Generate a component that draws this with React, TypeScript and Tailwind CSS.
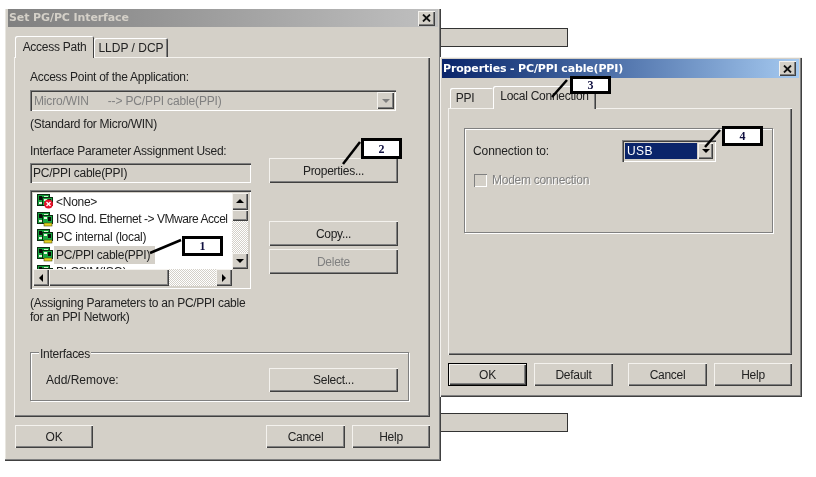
import React from "react";

const raised = "bg-[#d4d0c8] shadow-[inset_1px_1px_0_#f4f2ee,inset_-1px_-1px_0_#404040,inset_-2px_-2px_0_#808080]";
const sunken = "shadow-[inset_1px_1px_0_#808080,inset_2px_2px_0_#404040,inset_-1px_-1px_0_#ffffff]";
const panel = "bg-[#d4d0c8] shadow-[inset_1px_1px_0_#f4f2ee,inset_-1px_-1px_0_#404040,inset_-2px_-2px_0_#808080]";
const etched = "border border-[#808080] shadow-[1px_1px_0_#fff,inset_1px_1px_0_#fff]";

function Btn({ label, className = "" }: { label: string; className?: string }) {
  return <div className={`flex items-center justify-center ${raised} ${className}`}>{label}</div>;
}

function CloseBtn() {
  return (
    <div className={`w-[17px] h-[15px] flex items-center justify-center ${raised}`}>
      <svg width="9" height="8" viewBox="0 0 9 8">
        <path d="M1 0.5 L8 7.5 M8 0.5 L1 7.5" stroke="#111" strokeWidth="1.8" fill="none" />
      </svg>
    </div>
  );
}

function Arrow({ dir, color = "#000" }: { dir: "up" | "down" | "left" | "right"; color?: string }) {
  const d = { up: "M0 5 L4 1 L8 5 Z", down: "M0 2 L8 2 L4 6 Z", left: "M6 0 L6 8 L2 4 Z", right: "M2 0 L2 8 L6 4 Z" }[dir];
  return (
    <svg width="8" height="8" viewBox="0 0 8 8">
      <path d={d} fill={color} />
    </svg>
  );
}

function Chip({ bad }: { bad?: boolean }) {
  return (
    <svg width="17" height="15" viewBox="0 0 17 15" className="shrink-0">
      <rect x="0.5" y="0.5" width="12" height="11" fill="#14a03c" stroke="#0a2a10" />
      <rect x="2" y="2" width="3" height="4" fill="#0b0b0b" />
      <rect x="7" y="2" width="4" height="2" fill="#d8f0d0" />
      <rect x="2" y="8" width="3" height="2" fill="#e8f4e0" />
      <rect x="5.5" y="3.5" width="10" height="8" fill="#18a840" stroke="#0a2a10" />
      <rect x="7" y="5" width="3" height="2" fill="#eaf6e4" />
      <rect x="11" y="5" width="3" height="4" fill="#0b0b0b" />
      {bad ? (
        <g>
          <circle cx="11.5" cy="10" r="4.5" fill="#e8102a" />
          <path d="M9.5 8 L13.5 12 M13.5 8 L9.5 12" stroke="#fff" strokeWidth="1.4" />
        </g>
      ) : (
        <rect x="7" y="11" width="8" height="3" fill="#e3d21f" stroke="#4a4a10" strokeWidth="0.6" />
      )}
    </svg>
  );
}

function ListRow({ text, sel, bad, tight }: { text: string; sel?: boolean; bad?: boolean; tight?: boolean }) {
  return (
    <div className="flex items-center h-[17.6px] whitespace-nowrap">
      <Chip bad={bad} />
      <span className={`h-[18px] leading-[18px] ${tight ? "tracking-[-0.45px]" : ""} ${sel ? "bg-[#d4d0c8] pl-[2px] pr-[1px] w-[101px]" : "pl-[2px]"}`}>{text}</span>
    </div>
  );
}

function Callout({ n, className }: { n: string; className: string }) {
  return (
    <div
      className={`absolute z-20 w-[41px] bg-white border-[3px] border-black flex items-center justify-center text-[12px] tracking-normal leading-none font-bold text-[#101040] font-['Liberation_Serif',serif] ${className}`}
    >
      {n}
    </div>
  );
}

const dither = "bg-[repeating-conic-gradient(#ffffff_0_25%,#d4d0c8_0_50%)] bg-[length:2px_2px]";

export default function App() {
  return (
    <div className="relative w-[816px] h-[477px] bg-white overflow-hidden text-[12px] tracking-[-0.27px] leading-[14px] text-[#222] font-['Liberation_Sans',Arial,sans-serif] blur-[0.35px]">
      {/* Background slivers */}
      <div className="absolute left-[438px] top-[28px] w-[130px] h-[19px] bg-[#d4d0c8] border border-[#333]" />
      <div className="absolute left-[438px] top-[413px] w-[130px] h-[19px] bg-[#d4d0c8] border border-[#333]" />

      {/* Left window */}
      <div className="absolute left-[5px] top-[9px] w-[436px] h-[452px] bg-[#d4d0c8] shadow-[inset_-1px_-1px_0_#404040,inset_-2px_-2px_0_#808080,inset_1px_0_0_#e8e6e0] flex flex-col px-[3px] pt-0">
        <div className="h-[18px] flex items-center justify-between pl-[1px] pr-[3px] bg-gradient-to-r from-[#808080] to-[#c0c0c0]">
          <span className="font-bold text-[11px] tracking-[-0.1px] text-[#d4d0c8] font-['DejaVu_Sans',sans-serif] whitespace-nowrap">Set PG/PC Interface</span>
          <CloseBtn />
        </div>

        {/* Tabs */}
        <div className="flex items-end h-[30px] pl-[7px] relative z-10">
          <div className="w-[79px] h-[22px] -mb-px flex items-center justify-center rounded-t-[2px] bg-[#d4d0c8] shadow-[inset_1px_1px_0_#fff,inset_-1px_0_0_#404040]">Access Path</div>
          <div className="w-[74px] h-[19px] flex items-center justify-center rounded-t-[2px] bg-[#d4d0c8] shadow-[inset_1px_1px_0_#fff,inset_-1px_0_0_#404040,inset_-2px_0_0_#808080] tracking-normal">LLDP / DCP</div>
        </div>

        {/* Tab body */}
        <div className={`ml-[6px] w-[416px] h-[360px] pl-[16px] pt-[13px] flex flex-col ${panel}`}>
          <div className="h-[14px]">Access Point of the Application:</div>
          <div className={`mt-[6px] w-[366px] h-[21px] flex items-center justify-between pl-[4px] pr-[2px] tracking-[-0.15px] text-[#808080] ${sunken}`}>
            <span className="whitespace-pre">Micro/WIN      --&gt; PC/PPI cable(PPI)</span>
            <div className={`w-[17px] h-[17px] flex items-center justify-center ${raised}`}>
              <Arrow dir="down" color="#808080" />
            </div>
          </div>
          <div className="mt-[6px] h-[14px]">(Standard for Micro/WIN)</div>

          <div className="flex mt-[13px]">
            <div className="w-[221px]">
              <div className="h-[14px]">Interface Parameter Assignment Used:</div>
              <div className={`mt-[5px] h-[20px] pl-[3px] flex items-center ${sunken}`}>PC/PPI cable(PPI)</div>
              <div className={`mt-[7px] h-[99px] p-[3px] ${sunken} bg-[#d4d0c8]`}>
                <div className="grid grid-cols-[199px_16px] grid-rows-[76px_17px] h-[93px]">
                  <div className="bg-white overflow-hidden pl-[4px] pt-0">
                    <ListRow text="<None>" bad />
                    <ListRow text="ISO Ind. Ethernet -> VMware Accel" tight />
                    <ListRow text="PC internal (local)" />
                    <ListRow text="PC/PPI cable(PPI)" sel />
                    <ListRow text="PLCSIM(ISO)" />
                  </div>
                  <div className="flex flex-col">
                    <div className={`h-[17px] flex items-center justify-center ${raised}`}><Arrow dir="up" /></div>
                    <div className={`h-[11px] ${raised}`} />
                    <div className={`flex-1 ${dither}`} />
                    <div className={`h-[16px] flex items-center justify-center ${raised}`}><Arrow dir="down" /></div>
                  </div>
                  <div className="flex">
                    <div className={`w-[16px] flex items-center justify-center ${raised}`}><Arrow dir="left" /></div>
                    <div className={`w-[120px] ${raised}`} />
                    <div className={`flex-1 ${dither}`} />
                    <div className={`w-[16px] flex items-center justify-center ${raised}`}><Arrow dir="right" /></div>
                  </div>
                  <div className="bg-[#d4d0c8]" />
                </div>
              </div>
              <div className="mt-[7px] h-[28px] w-[225px]">(Assigning Parameters to an PC/PPI cable for an PPI Network)</div>
            </div>
            <div className="ml-[18px] w-[129px] flex flex-col">
              <Btn label="Properties..." className="mt-[14px] h-[25px]" />
              <Btn label="Copy..." className="mt-[38px] h-[25px]" />
              <Btn label="Delete" className="mt-[3px] h-[25px] text-[#808080]" />
            </div>
          </div>

          <div className={`relative mt-[28px] w-[379px] h-[49px] pl-[15px] pr-[10px] flex items-center justify-between ${etched}`}>
            <span className="absolute left-[8px] -top-[6px] bg-[#d4d0c8] px-[1px]">Interfaces</span>
            <span className="mt-[7px] tracking-normal">Add/Remove:</span>
            <Btn label="Select..." className="w-[129px] h-[24px] mt-[7px]" />
          </div>
        </div>

        {/* Footer */}
        <div className="flex ml-[7px] w-[415px] mt-[8px]">
          <Btn label="OK" className="w-[78px] h-[23px]" />
          <Btn label="Cancel" className="ml-auto w-[79px] h-[23px]" />
          <Btn label="Help" className="ml-[7px] w-[78px] h-[23px]" />
        </div>
      </div>

      {/* Right window */}
      <div className="absolute left-[440px] top-[57px] w-[362px] h-[340px] bg-[#d4d0c8] shadow-[inset_1px_1px_0_#f4f2ee,inset_-1px_-1px_0_#404040,inset_-2px_-2px_0_#808080] flex flex-col pl-[2px] pr-[3px] pt-[2px]">
        <div className="h-[19px] flex items-center justify-between pl-[1px] pr-[3px] bg-gradient-to-r from-[#0a246a] to-[#a6caf0]">
          <span className="font-bold text-[11px] tracking-[-0.15px] text-white font-['DejaVu_Sans',sans-serif] whitespace-nowrap">Properties - PC/PPI cable(PPI)</span>
          <CloseBtn />
        </div>

        <div className="flex items-end h-[30px] pl-[8px] relative z-10">
          <div className="w-[43px] h-[20px] pr-[13px] flex items-center justify-center rounded-t-[2px] shadow-[inset_1px_1px_0_#fff]">PPI</div>
          <div className="w-[103px] h-[23px] -mb-px pb-[3px] flex items-center justify-center rounded-t-[2px] bg-[#d4d0c8] shadow-[inset_1px_1px_0_#fff,inset_-1px_0_0_#404040,inset_-2px_0_0_#808080]">Local Connection</div>
        </div>

        <div className={`ml-[6px] w-[344px] h-[247px] pl-[16px] pt-[20px] ${panel}`}>
          <div className={`w-[309px] h-[105px] pl-[8px] pt-[11px] ${etched}`}>
            <div className="flex items-center justify-between pr-[56px] h-[22px]">
              <span className="tracking-[-0.1px]">Connection to:</span>
              <div className={`w-[94px] h-[22px] flex items-center p-[3px] ${sunken}`}>
                <div className="w-[72px] h-[16px] bg-[#0a246a] text-white pl-[2px] leading-[16px] tracking-[0.4px]">USB</div>
                <div className={`ml-[1px] flex-1 h-[16px] flex items-center justify-center ${raised}`}><Arrow dir="down" /></div>
              </div>
            </div>
            <div className="flex items-center ml-[1px] mt-[11px] text-[#808080] [text-shadow:1px_1px_0_#fff]">
              <div className="w-[13px] h-[13px] shadow-[inset_1px_1px_0_#808080,inset_-1px_-1px_0_#fff]" />
              <span className="ml-[5px]">Modem connection</span>
            </div>
          </div>
        </div>

        <div className="flex ml-[6px] w-[344px] mt-[8px]">
          <Btn label="OK" className="w-[79px] h-[23px] border border-black" />
          <Btn label="Default" className="ml-[7px] w-[79px] h-[23px]" />
          <Btn label="Cancel" className="ml-[15px] w-[79px] h-[23px]" />
          <Btn label="Help" className="ml-[7px] w-[78px] h-[23px]" />
        </div>
      </div>

      {/* Annotations */}
      <svg className="absolute z-20 left-0 top-0 pointer-events-none" width="816" height="477" viewBox="0 0 816 477">
        <g stroke="#000" strokeWidth="2.5" fill="none">
          <path d="M181 240 L150 253" />
          <path d="M360 142 L343 164" />
          <path d="M567 80 L552 97" />
          <path d="M720 130 L705 147" />
        </g>
      </svg>
      <Callout n="1" className="left-[182px] top-[236px] h-[20px]" />
      <Callout n="2" className="left-[361px] top-[138px] h-[21px]" />
      <Callout n="3" className="left-[570px] top-[76px] h-[18px]" />
      <Callout n="4" className="left-[722px] top-[126px] h-[20px]" />
    </div>
  );
}
